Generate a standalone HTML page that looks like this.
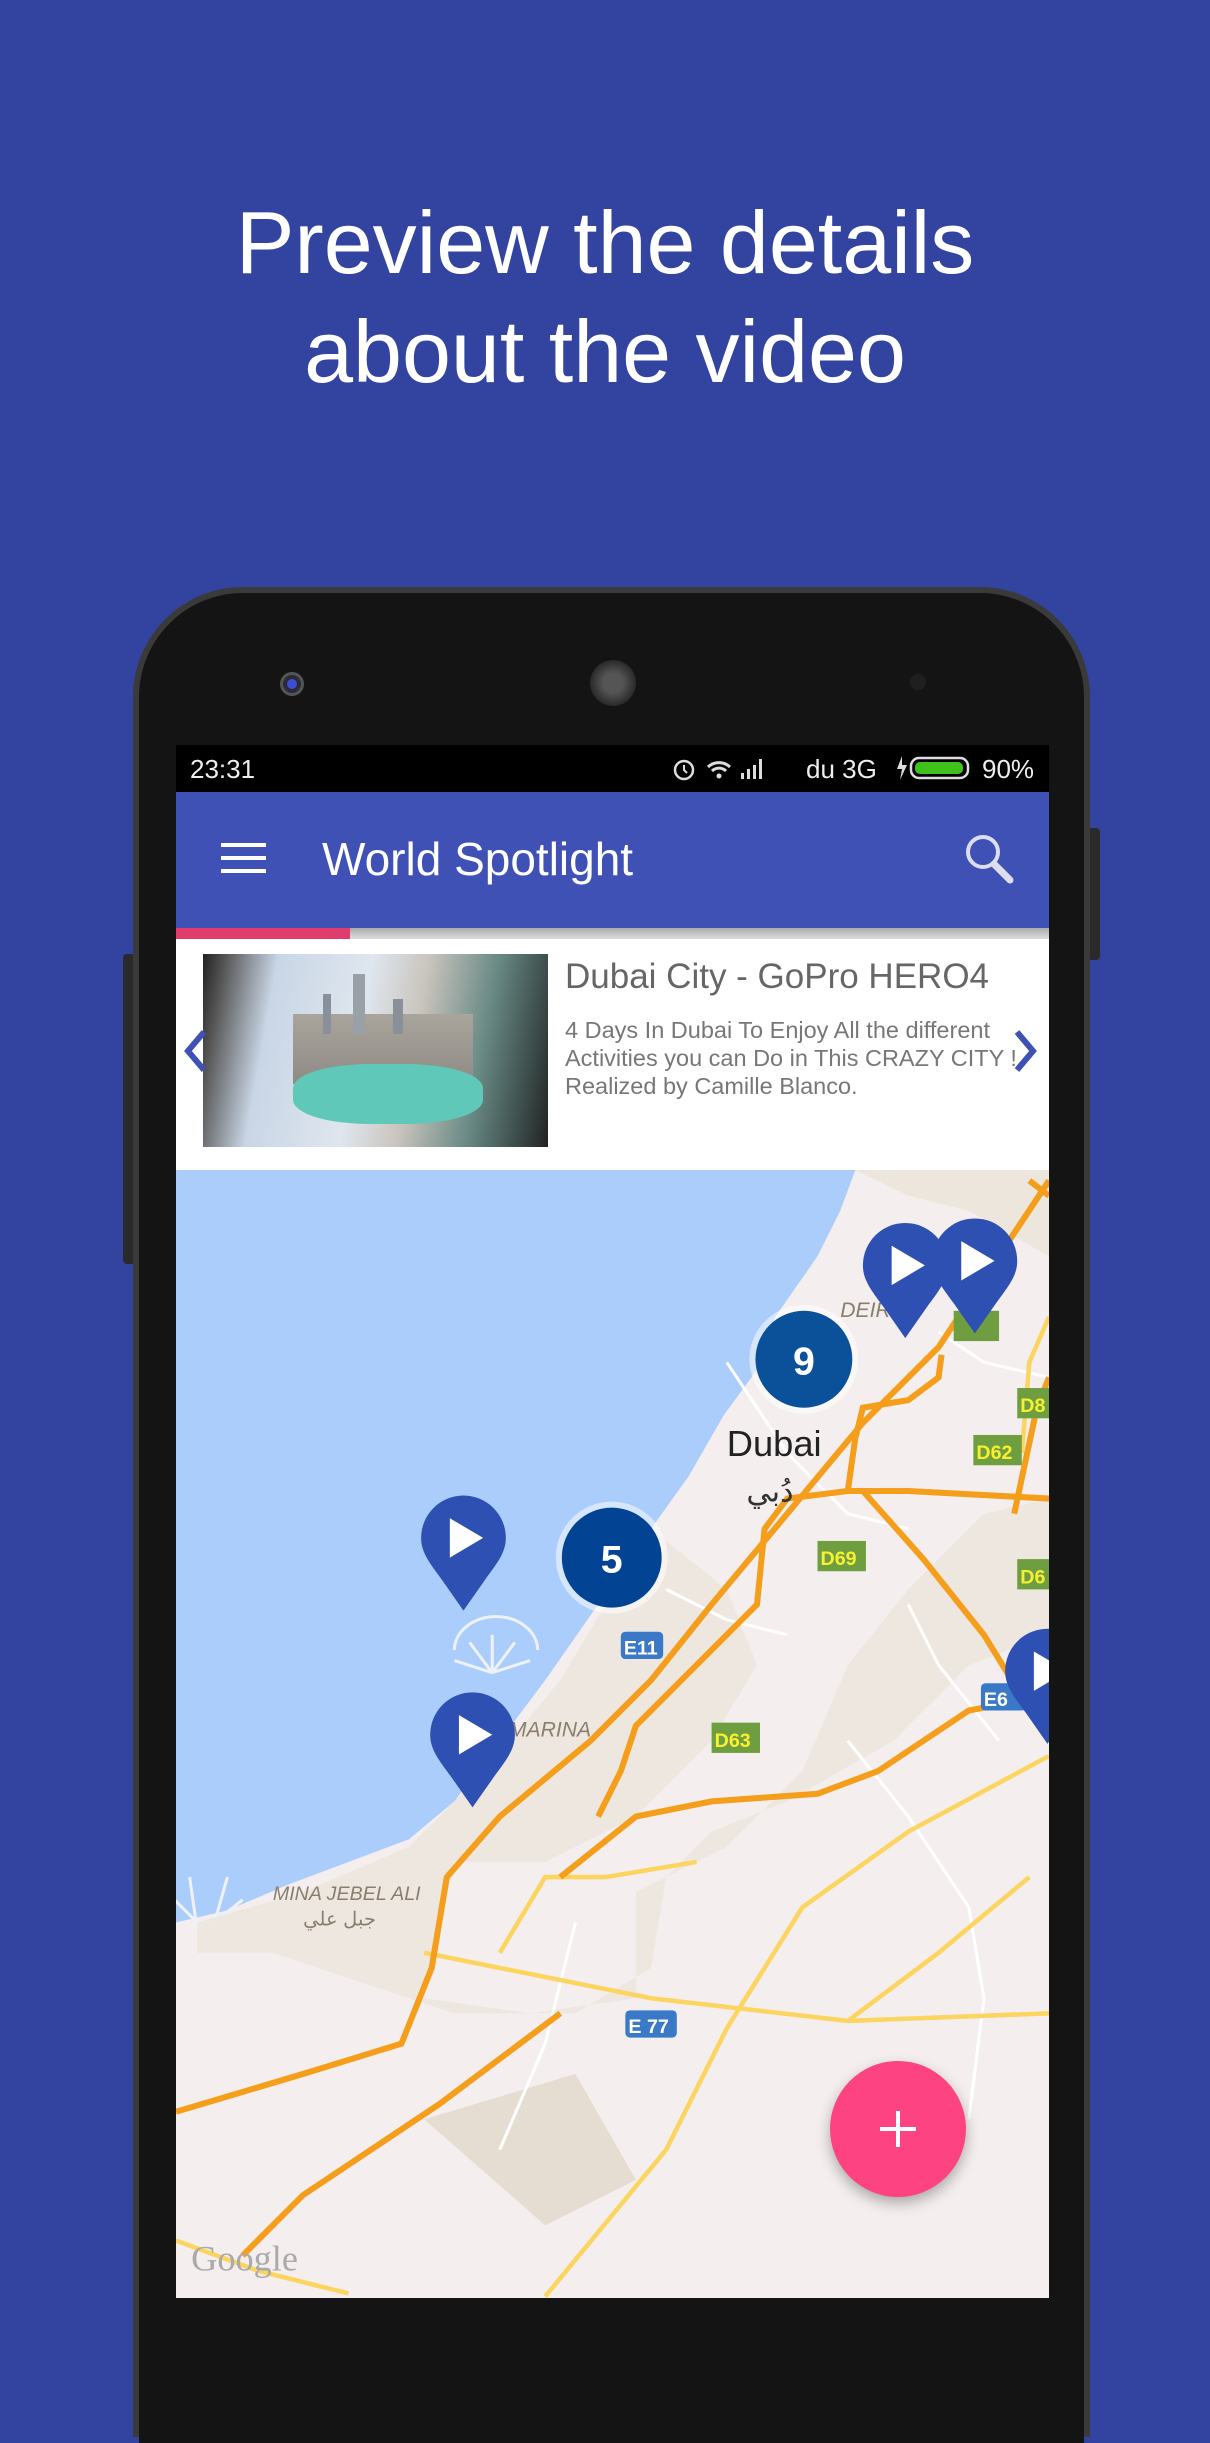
<!DOCTYPE html>
<html><head><meta charset="utf-8"><style>
*{margin:0;padding:0;box-sizing:border-box}
body{width:1210px;height:2375px;background:#3244a0;position:relative;overflow:hidden;font-family:"Liberation Sans",Arial,sans-serif}
.abs{position:absolute}
h1{position:absolute;left:0;width:1210px;text-align:center;color:#fff;font-weight:400;font-size:88px;line-height:109px;top:188px;letter-spacing:0px}
</style></head><body>
<h1>Preview the details<br>about the video</h1>

<div class="abs" style="left:123px;top:954px;width:12px;height:310px;background:#2a2a2a;border-radius:4px"></div>
<div class="abs" style="left:1088px;top:828px;width:12px;height:132px;background:#2a2a2a;border-radius:4px"></div>
<div class="abs" style="left:133px;top:587px;width:957px;height:1850px;background:#3a3a3a;border-radius:110px 110px 0 0"></div>
<div class="abs" style="left:139px;top:593px;width:945px;height:1850px;background:#141414;border-radius:104px 104px 0 0"></div>
<div class="abs" style="left:280px;top:672px;width:24px;height:24px;border-radius:50%;background:#2a2a3a;border:3px solid #555"></div>
<div class="abs" style="left:287px;top:679px;width:10px;height:10px;border-radius:50%;background:#3a4fd0"></div>
<div class="abs" style="left:590px;top:660px;width:46px;height:46px;border-radius:50%;background:radial-gradient(#555 30%,#2a2a2a 70%)"></div>
<div class="abs" style="left:910px;top:674px;width:16px;height:16px;border-radius:50%;background:#1f1f1f"></div>

<div class="abs" style="left:176px;top:745px;width:873px;height:1553px;background:#fff;overflow:hidden">
  <div class="abs" style="left:0;top:0;width:873px;height:47px;background:#000;color:#eee;font-size:26px">
    <span class="abs" style="left:14px;top:9px">23:31</span>
    <svg class="abs" style="left:495px;top:10px" width="200" height="28" viewBox="0 0 200 28">
      <circle cx="13" cy="15" r="9" fill="none" stroke="#ddd" stroke-width="2.5"/><path d="M13 10v5l3 3" stroke="#ddd" stroke-width="2" fill="none"/>
      <path d="M37 12a16 16 0 0 1 22 0M41 16a10 10 0 0 1 14 0" stroke="#ddd" stroke-width="3" fill="none"/><circle cx="48" cy="21" r="2.5" fill="#ddd"/>
      <rect x="70" y="18" width="3" height="6" fill="#ddd"/><rect x="76" y="14" width="3" height="10" fill="#ddd"/><rect x="82" y="10" width="3" height="14" fill="#ddd"/><rect x="88" y="4" width="3" height="20" fill="#ddd"/>
    </svg>
    <span class="abs" style="left:630px;top:9px">du 3G</span>
    <svg class="abs" style="left:718px;top:8px" width="120" height="30" viewBox="0 0 120 30"><path d="M8 3 3 16h5l-2 11 7-15H8z" fill="#ddd"/><rect x="17" y="5" width="57" height="20" rx="8" fill="none" stroke="#ddd" stroke-width="2.5"/><rect x="21" y="9" width="48" height="12" rx="5" fill="#3ec21a"/></svg>
    <span class="abs" style="left:806px;top:9px">90%</span>
  </div>
  <div class="abs" style="left:0;top:47px;width:873px;height:136px;background:#3f51b5">
    <div class="abs" style="left:45px;top:51px;width:45px;height:4px;background:#fff"></div>
    <div class="abs" style="left:45px;top:64px;width:45px;height:4px;background:#fff"></div>
    <div class="abs" style="left:45px;top:77px;width:45px;height:4px;background:#fff"></div>
    <span class="abs" style="left:146px;top:40px;color:#fff;font-size:46px">World Spotlight</span>
    <svg class="abs" style="left:786px;top:38px" width="56" height="56" viewBox="0 0 56 56"><circle cx="21" cy="22" r="15" fill="none" stroke="#dde" stroke-width="4"/><path d="M32 34l16 16" stroke="#dde" stroke-width="7" stroke-linecap="round"/></svg>
  </div>
  <div class="abs" style="left:0;top:183px;width:873px;height:11px;background:linear-gradient(#aaa,#ddd)"></div>
  <div class="abs" style="left:0;top:183px;width:174px;height:11px;background:#e03c6c"></div>
  <!-- thumbnail -->
  <div class="abs" style="left:27px;top:209px;width:345px;height:193px;overflow:hidden;background:linear-gradient(100deg,#222 0,#555 6%,#c9d6e6 20%,#dfe6ee 45%,#c9c4bd 60%,#6a8a86 78%,#3a4a48 92%,#222 100%)">
    <div class="abs" style="left:90px;top:60px;width:180px;height:70px;background:linear-gradient(#a9a49c,#8f8a84)"></div>
    <div class="abs" style="left:150px;top:20px;width:12px;height:60px;background:#9aa0a8"></div>
    <div class="abs" style="left:120px;top:40px;width:8px;height:40px;background:#8a909a"></div>
    <div class="abs" style="left:190px;top:45px;width:10px;height:35px;background:#8a909a"></div>
    <div class="abs" style="left:90px;top:110px;width:190px;height:60px;background:#5fc8b8;border-radius:40%"></div>
  </div>
  <span class="abs" style="left:389px;top:212px;color:#666;font-size:35px;white-space:nowrap">Dubai City - GoPro HERO4</span>
  <div class="abs" style="left:389px;top:271px;color:#777;font-size:23.5px;line-height:28px;white-space:nowrap">4 Days In Dubai To Enjoy All the different<br>Activities you can Do in This CRAZY CITY !<br>Realized by Camille Blanco.</div>
  <svg class="abs" style="left:6px;top:283px" width="26" height="46" viewBox="0 0 26 46"><path d="M22 4 6 23l16 19" stroke="#3f51b5" stroke-width="6" fill="none"/></svg>
  <svg class="abs" style="left:837px;top:283px" width="26" height="46" viewBox="0 0 26 46"><path d="M4 4l16 19L4 42" stroke="#3f51b5" stroke-width="6" fill="none"/></svg>

  <svg class="abs" style="left:0;top:425px" width="873" height="1128" viewBox="116 773 577 745" preserveAspectRatio="none">
    <rect x="116" y="773" width="577" height="745" fill="#f4efee"/>
    <path d="M116 773H565L555 800 540 830 512 870 500 905 478 935 455 975 430 1010 395 1060 360 1110 330 1150 300 1190 270 1215 230 1230 190 1245 150 1262 116 1270Z" fill="#abcdfb"/>
    <path d="M565 773H693V830L640 800 600 790Z" fill="#ece6dc"/>
    <g fill="none" stroke="#eef2f8" stroke-width="2">
      <path d="M300 1090a25 20 0 1 1 55 0"/><path d="M325 1105l-15-20M325 1105l0-25M325 1105l15-20M325 1105l-25-8M325 1105l25-8"/>
      <path d="M130 1275l-5-35M140 1275l10-35M135 1275l-20-20M135 1275l25-20"/>
    </g>
    <path d="M430 1010 480 1050 500 1100 470 1150 420 1200 360 1230 300 1230 280 1320 350 1330 420 1320 420 1250 480 1220 530 1170 560 1100 600 1050 650 1000 693 990V1080L640 1100 590 1150 520 1190 470 1210 440 1240 430 1300 380 1330 300 1330 240 1310 180 1290 130 1290 130 1270 200 1250 270 1220 320 1170 370 1110Z" fill="#ebe5dc" opacity=".8"/>
    <path d="M280 1400 380 1370 420 1440 360 1470Z" fill="#e6ddd2"/>
    <g fill="none" stroke="#ffffff" stroke-width="2">
      <path d="M480 900 520 960 560 1000 600 1010"/><path d="M440 1050 480 1070 520 1080"/><path d="M600 1060 620 1100 660 1150"/>
      <path d="M560 1150 600 1200 640 1260 650 1320 640 1400"/><path d="M380 1270 360 1350 330 1420"/><path d="M620 880 650 900 693 910"/>
    </g>
    <g fill="none" stroke="#fcd460" stroke-width="3">
      <path d="M116 1480 170 1500 230 1515"/><path d="M280 1290 430 1320 560 1335 693 1330"/><path d="M330 1290 360 1240 400 1240 460 1230"/><path d="M360 1517 440 1420 480 1340 530 1260 600 1210 693 1160"/><path d="M560 1335 620 1290 680 1240"/><path d="M693 870 680 900 675 960"/>
    </g>
    <g fill="none" stroke="#f59e1c" stroke-width="4">
      <path d="M116 1395 200 1370 265 1350 285 1300 295 1240 330 1200 390 1150 430 1110 470 1060 520 1000 570 940 620 890 693 780"/>
      <path d="M160 1490 200 1450 290 1390 370 1330"/>
      <path d="M370 1240 420 1200 470 1190 540 1185 580 1170 640 1130 693 1120"/>
      <path d="M395 1200 410 1170 420 1140 460 1100 500 1060 505 1010 520 990 560 985 600 985 693 990"/>
      <path d="M560 985 565 950 570 930 600 925 620 910 622 895"/>
      <path d="M570 985 610 1030 650 1080 693 1150"/>
      <path d="M680 780 693 790M670 1000 685 930 693 910"/>
    </g>
    <g font-family="Liberation Sans,sans-serif">
      <text x="480" y="962" font-size="24" fill="#222">Dubai</text>
      <text x="493" y="992" font-size="20" fill="#333">دُبي</text>
      <text x="555" y="870" font-size="14" fill="#8a7e6e" font-style="italic">DEIR</text>
      <text x="336" y="1147" font-size="14" fill="#8a7e6e" font-style="italic">MARINA</text>
      <text x="180" y="1255" font-size="13" fill="#8a7e6e" font-style="italic">MINA JEBEL ALI</text>
      <text x="200" y="1272" font-size="13" fill="#8a7e6e">جبل علي</text>
      <text x="126" y="1500" font-size="24" fill="#aaa" font-family="Liberation Serif,serif">Google</text>
      <g font-size="13" font-weight="bold" fill="#f8f030">
        <rect x="540" y="1018" width="32" height="20" fill="#6e9e40"/><text x="542" y="1034">D69</text>
        <rect x="470" y="1138" width="32" height="20" fill="#6e9e40"/><text x="472" y="1154">D63</text>
        <rect x="643" y="948" width="32" height="20" fill="#6e9e40"/><text x="645" y="964">D62</text>
        <rect x="672" y="917" width="21" height="20" fill="#6e9e40"/><text x="674" y="933">D8</text>
        <rect x="672" y="1030" width="21" height="20" fill="#6e9e40"/><text x="674" y="1046">D6</text>
        <rect x="630" y="866" width="30" height="20" fill="#6e9e40"/>
        <rect x="410" y="1078" width="28" height="18" rx="3" fill="#3a78c8"/><text x="412" y="1093" fill="#ffe">E11</text>
        <rect x="413" y="1328" width="34" height="18" rx="3" fill="#3a78c8"/><text x="415" y="1343" fill="#ffe">E 77</text>
        <rect x="648" y="1112" width="30" height="18" rx="3" fill="#3a78c8"/><text x="650" y="1127" fill="#ffe">E6</text>
      </g>
    </g>
    <circle cx="531" cy="898" r="36" fill="#fff" opacity=".5"/><circle cx="531" cy="898" r="32" fill="#0b5199"/>
    <text x="531" y="908" font-size="26" font-weight="bold" fill="#fff" text-anchor="middle" font-family="Liberation Sans,sans-serif">9</text>
    <circle cx="404" cy="1029" r="37" fill="#fff" opacity=".5"/><circle cx="404" cy="1029" r="33" fill="#024393"/>
    <text x="404" y="1039" font-size="26" font-weight="bold" fill="#fff" text-anchor="middle" font-family="Liberation Sans,sans-serif">5</text>
    <defs><g id="pin"><path d="M-28 0a28 28 0 0 1 56 0c0 10-6 17-14 28L0 48-14 28C-22 17-28 10-28 0z" fill="#2f50b3"/><path d="M-9-13 13 0-9 13z" fill="#fff"/></g></defs>
    <use href="#pin" x="306" y="1016"/><use href="#pin" x="312" y="1146"/><use href="#pin" x="598" y="836"/><use href="#pin" x="644" y="833"/><use href="#pin" x="692" y="1104"/>
  </svg>
  <div class="abs" style="left:654px;top:1316px;width:136px;height:136px;border-radius:50%;background:#fd4381;box-shadow:0 6px 14px rgba(0,0,0,.3)"></div>
  <div class="abs" style="left:704px;top:1382px;width:36px;height:4px;background:#fff"></div>
  <div class="abs" style="left:720px;top:1366px;width:4px;height:36px;background:#fff"></div>
</div>
</body></html>
